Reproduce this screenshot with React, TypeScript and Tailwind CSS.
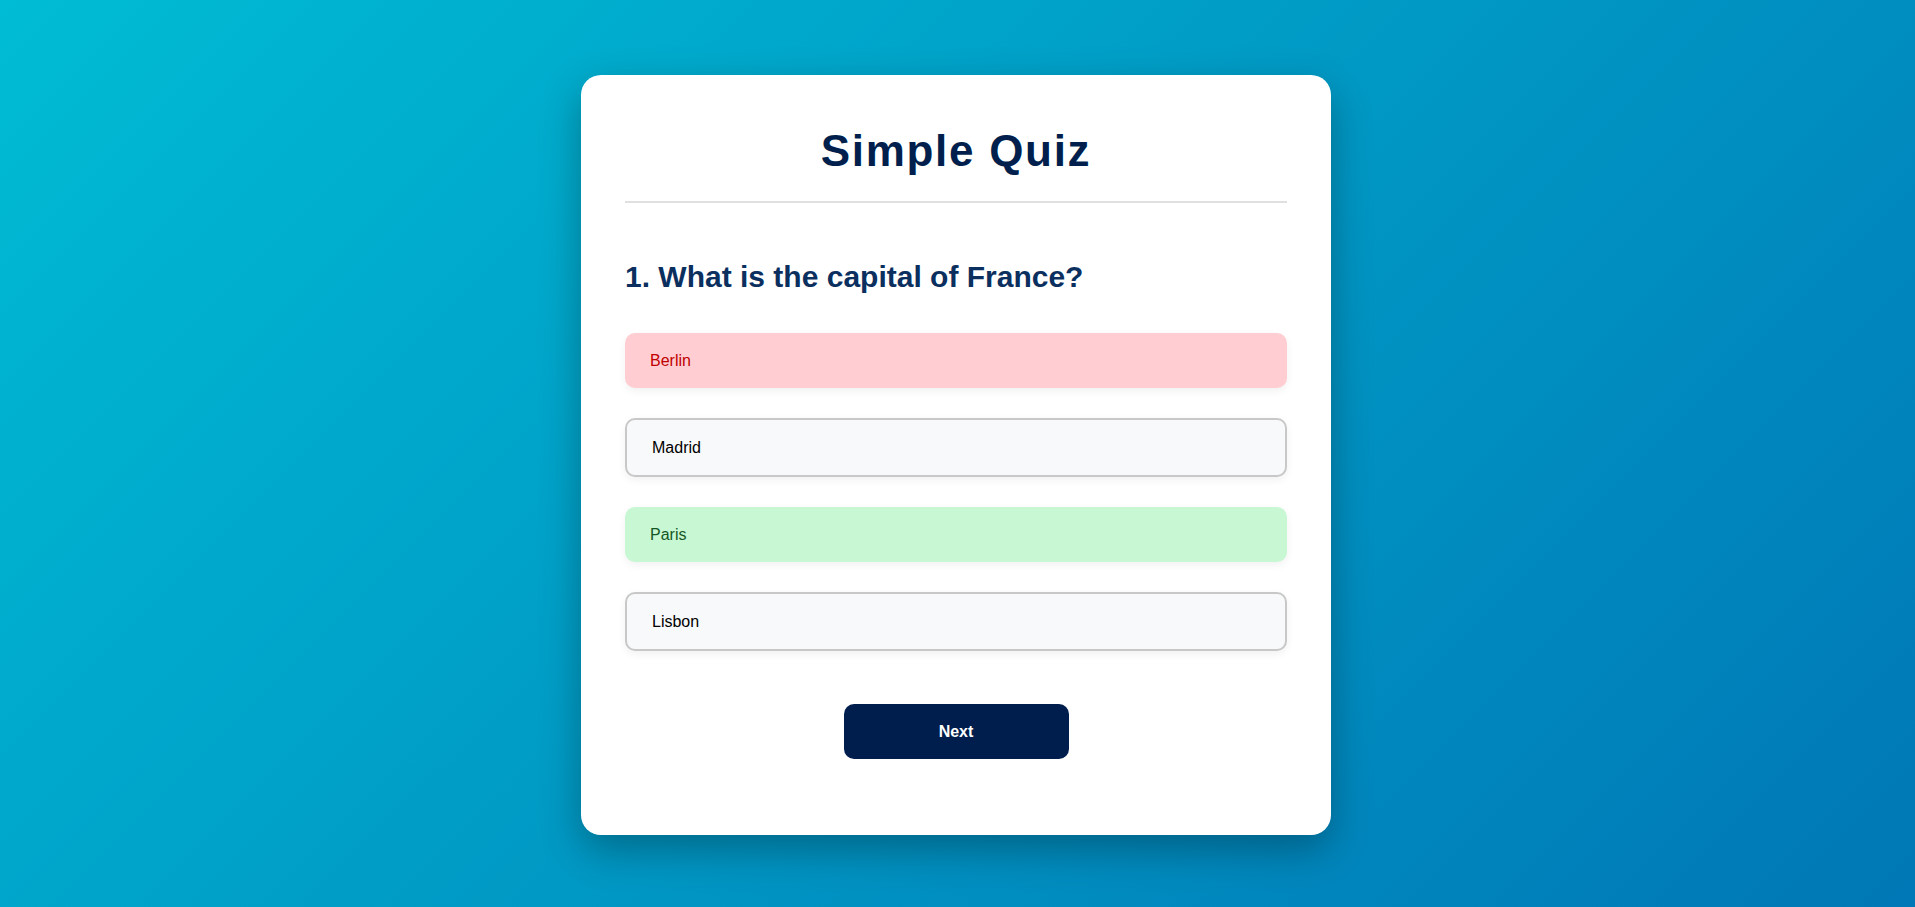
import { useState } from "react";

interface Option {
  id: string;
  label: string;
  state: "wrong" | "right" | "idle";
}

const options: Option[] = [
  { id: "a", label: "Berlin", state: "wrong" },
  { id: "b", label: "Madrid", state: "idle" },
  { id: "c", label: "Paris", state: "right" },
  { id: "d", label: "Lisbon", state: "idle" },
];

export default function App() {
  const [picked] = useState("a");

  return (
    <div className="min-h-screen w-full bg-[linear-gradient(135deg,#00bcd4,#0077b6)] flex justify-center pt-[75px] pr-[3px] font-['Liberation_Sans',Arial,sans-serif]">
      <div className="w-[750px] h-fit bg-white rounded-[20px] px-[44px] pt-[51px] pb-[76px] shadow-[0_15px_40px_rgba(0,0,0,0.3)]">
        {/* Title */}
        <h1 className="text-center text-[44px] leading-[1.15] font-bold tracking-[1.7px] text-[#001f4d] pb-6 border-b-2 border-[#e0e0e0]">
          Simple Quiz
        </h1>

        {/* Question */}
        <h2 className="mt-[57px] text-[30px] leading-[34.5px] font-bold text-[#0b2f5e]">
          1. What is the capital of France?
        </h2>

        <div className="mt-[39px] flex flex-col gap-[30px]">
          {options.map((opt) => (
            <button
              key={opt.id}
              data-picked={picked === opt.id}
              className={
                opt.state === "wrong"
                  ? "w-full text-left rounded-[10px] px-[25px] py-[18px] text-base leading-[19px] bg-[#ffcdd2] text-[#c00000] shadow-[0_3px_8px_rgba(0,0,0,0.06)]"
                  : opt.state === "right"
                    ? "w-full text-left rounded-[10px] px-[25px] py-[18px] text-base leading-[19px] bg-[#c8f7d4] text-[#155724] shadow-[0_3px_8px_rgba(0,0,0,0.06)]"
                    : "w-full text-left rounded-[10px] px-[25px] py-[18px] text-base leading-[19px] bg-[#f8f9fa] text-black border-2 border-[#c8c8c8] shadow-[0_3px_8px_rgba(0,0,0,0.06)]"
              }
            >
              {opt.label}
            </button>
          ))}
        </div>

        <div className="flex justify-center mt-[53px]">
          <button className="w-[225px] h-[55px] rounded-[10px] bg-[#001e4d] text-white text-base font-bold">
            Next
          </button>
        </div>
      </div>
    </div>
  );
}
